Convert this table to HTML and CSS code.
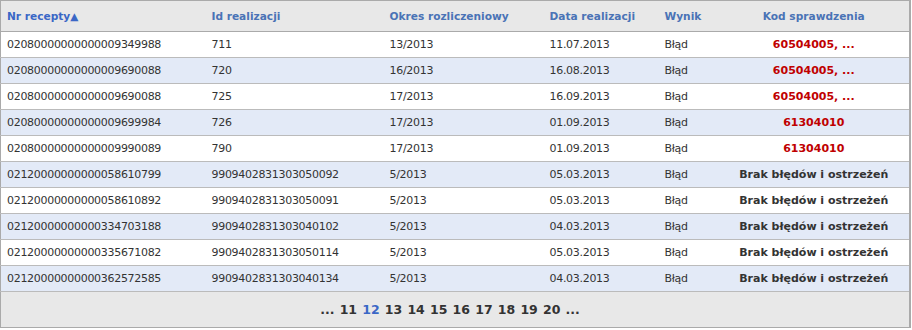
FILE: index.html
```html
<!DOCTYPE html>
<html>
<head>
<meta charset="utf-8">
<link rel="stylesheet" href="styles.css">
</head>
<body>
<div class="grid-wrap">
<table class="grid">
  <colgroup>
    <col class="c1"><col class="c2"><col class="c3"><col class="c4"><col class="c5"><col class="c6">
  </colgroup>
  <thead>
    <tr>
      <th class="sorted">Nr recepty▲</th>
      <th>Id realizacji</th>
      <th>Okres rozliczeniowy</th>
      <th>Data realizacji</th>
      <th>Wynik</th>
      <th class="center">Kod sprawdzenia</th>
    </tr>
  </thead>
  <tbody>
    <tr><td>02080000000000009349988</td><td>711</td><td>13/2013</td><td>11.07.2013</td><td>Błąd</td><td class="center err">60504005, ...</td></tr>
    <tr class="alt"><td>02080000000000009690088</td><td>720</td><td>16/2013</td><td>16.08.2013</td><td>Błąd</td><td class="center err">60504005, ...</td></tr>
    <tr><td>02080000000000009690088</td><td>725</td><td>17/2013</td><td>16.09.2013</td><td>Błąd</td><td class="center err">60504005, ...</td></tr>
    <tr class="alt"><td>02080000000000009699984</td><td>726</td><td>17/2013</td><td>01.09.2013</td><td>Błąd</td><td class="center err">61304010</td></tr>
    <tr><td>02080000000000009990089</td><td>790</td><td>17/2013</td><td>01.09.2013</td><td>Błąd</td><td class="center err">61304010</td></tr>
    <tr class="alt"><td>02120000000000058610799</td><td>9909402831303050092</td><td>5/2013</td><td>05.03.2013</td><td>Błąd</td><td class="center ok">Brak błędów i ostrzeżeń</td></tr>
    <tr><td>02120000000000058610892</td><td>9909402831303050091</td><td>5/2013</td><td>05.03.2013</td><td>Błąd</td><td class="center ok">Brak błędów i ostrzeżeń</td></tr>
    <tr class="alt"><td>02120000000000334703188</td><td>9909402831303040102</td><td>5/2013</td><td>04.03.2013</td><td>Błąd</td><td class="center ok">Brak błędów i ostrzeżeń</td></tr>
    <tr><td>02120000000000335671082</td><td>9909402831303050114</td><td>5/2013</td><td>05.03.2013</td><td>Błąd</td><td class="center ok">Brak błędów i ostrzeżeń</td></tr>
    <tr class="alt"><td>02120000000000362572585</td><td>9909402831303040134</td><td>5/2013</td><td>04.03.2013</td><td>Błąd</td><td class="center ok">Brak błędów i ostrzeżeń</td></tr>
  </tbody>
  <tfoot>
    <tr>
      <td colspan="6" class="pager">
        <span>...</span><span>11</span><span class="cur">12</span><span>13</span><span>14</span><span>15</span><span>16</span><span>17</span><span>18</span><span>19</span><span>20</span><span>...</span>
      </td>
    </tr>
  </tfoot>
</table>
</div>
</body>
</html>
```
FILE: styles.css
```css
html, body {
  margin: 0;
  padding: 0;
  background: #ffffff;
}
body {
  font-family: "DejaVu Sans", Verdana, sans-serif;
  font-size: 11px;
  color: #333333;
}
.grid-wrap {
  width: 912px;
}
.grid {
  width: 911px;
  border-collapse: collapse;
  table-layout: fixed;
  border: 1px solid #aaaaaa;
  border-right-width: 2px;
}
.c1 { width: 205px; }
.c2 { width: 178px; }
.c3 { width: 160px; }
.c4 { width: 115px; }
.c5 { width: 60px; }
.c6 { width: auto; }

.grid th {
  height: 30px;
  padding: 0 0 0 6px;
  background: #e8e8e8;
  color: #4a73b6;
  font-weight: bold;
  font-size: 10.6px;
  text-align: left;
  border-bottom: 1px solid #aaaaaa;
}
.grid th.sorted {
  color: #3a67c6;
}
.grid td {
  height: 25px;
  padding: 0 0 0 6px;
  border-bottom: 1px solid #bbbbbb;
  white-space: nowrap;
  overflow: hidden;
  letter-spacing: -0.3px;
}
.grid tr.alt td {
  background: #e3eaf7;
}
.grid .center {
  text-align: center;
  padding-left: 0;
}
.grid td.err {
  color: #c00000;
  font-weight: bold;
  letter-spacing: 0;
}
.grid td.ok {
  color: #333333;
  font-weight: bold;
  letter-spacing: 0;
}
.grid td.pager {
  height: 35px;
  background: #e8e8e8;
  text-align: center;
  font-weight: bold;
  font-size: 12.5px;
  letter-spacing: 0;
  padding: 0 10px 0 0;
  border-bottom: 1px solid #aaaaaa;
}
.pager span {
  margin: 0 2.6px;
}
.pager .cur {
  color: #3a67c6;
}
```
